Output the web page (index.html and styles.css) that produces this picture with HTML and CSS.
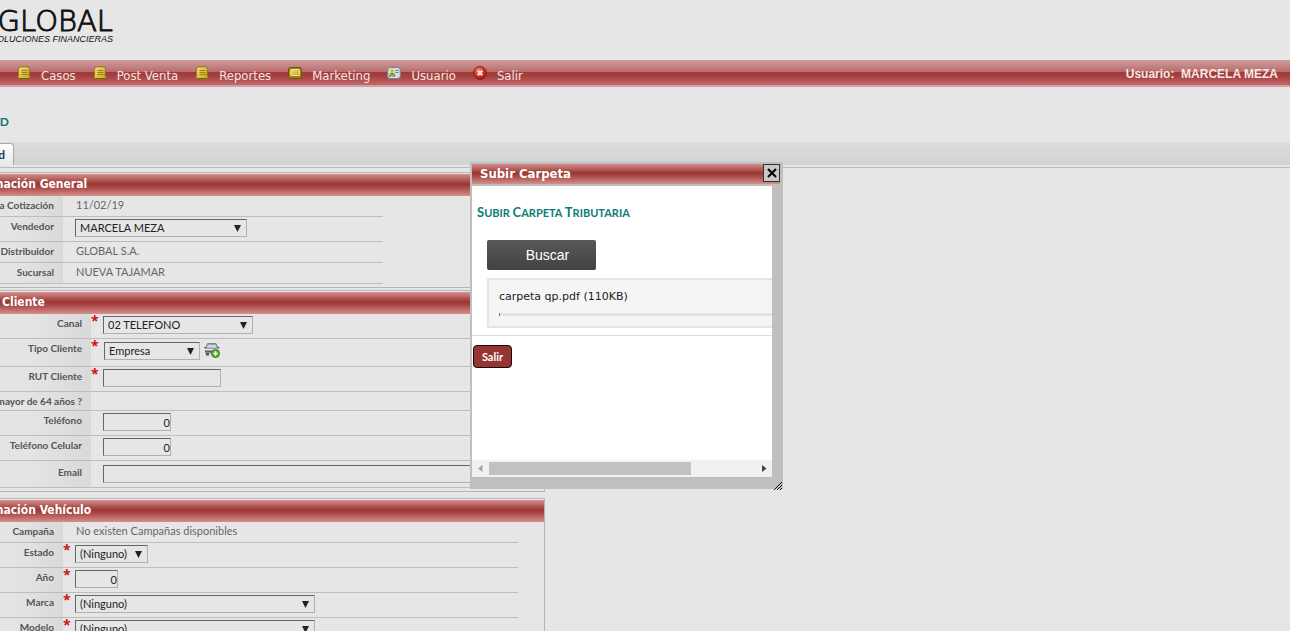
FILE: index.html
```html
<!DOCTYPE html>
<html lang="es">
<head>
<meta charset="utf-8">
<title>Global Soluciones Financieras</title>
<link rel="stylesheet" href="styles.css">
</head>
<body>
<svg class="defs" width="0" height="0" aria-hidden="true">
  <defs>
    <linearGradient id="gold" x1="0" y1="0" x2="1" y2="1"><stop offset="0" stop-color="#f0df86"/><stop offset="1" stop-color="#c9a21a"/></linearGradient>
    <radialGradient id="red" cx=".4" cy=".3" r=".8"><stop offset="0" stop-color="#f08a70"/><stop offset=".5" stop-color="#cf3422"/><stop offset="1" stop-color="#8d130c"/></radialGradient>
    <symbol id="note" viewBox="0 0 14 14"><path d="M4 .75h6.500Q12.500 1 12.500 3.500L12 9.500l1.300 1.500-1.300 2H3L.8 11.500 1.500 9.500 1.200 4Q1.500 1 4 .75z" fill="url(#gold)" stroke="#94740a"/><path d="M4.500 4.500h6M4.500 6.500h6M4.500 8.500h6" stroke="#a07c0a" fill="none"/><path d="M2.500 12.500h9.500" stroke="#7b5f08"/></symbol>
    <symbol id="card" viewBox="0 0 14 14"><rect x=".5" y="1.500" width="13" height="11" rx="2" fill="#a27f0c" stroke="#705408"/><rect x="2.500" y="3.500" width="9" height="6" rx="1" fill="url(#gold)" stroke="#f3e59a"/></symbol>
    <symbol id="user" viewBox="0 0 14 14"><rect x=".75" y="1.500" width="12.500" height="11" rx="2.500" fill="#d9dee2" stroke="#78858c"/><circle cx="5" cy="5" r="2" fill="#e8b83c"/><path d="M2 10.500Q2 7 5 7t3.500 3.500z" fill="#379b36"/><path d="M3 8l2 2 3-3" stroke="#a5d04d" fill="none"/><path d="M8.500 4.500h3M8.500 6.500h3" stroke="#63727b"/></symbol>
    <symbol id="exit" viewBox="0 0 14 14"><circle cx="7" cy="7" r="6.500" fill="url(#red)" stroke="#8d2018"/><path d="M4.800 4.800l4.400 4.400M9.200 4.800L4.800 9.200" stroke="#f5e6e2" stroke-width="2.200"/></symbol>
  </defs>
</svg>

<header class="brand">
  <div class="logo">
    <div class="logo-name">GLOBAL</div>
    <div class="logo-sub">SOLUCIONES FINANCIERAS</div>
  </div>
</header>

<nav class="menu">
  <a class="menu-item first" href="#">Inicio</a>
  <a class="menu-item" href="#"><svg class="icon"><use href="#note"/></svg>Casos</a>
  <a class="menu-item" href="#"><svg class="icon"><use href="#note"/></svg>Post Venta</a>
  <a class="menu-item" href="#"><svg class="icon"><use href="#note"/></svg>Reportes</a>
  <a class="menu-item" href="#"><svg class="icon"><use href="#card"/></svg>Marketing</a>
  <a class="menu-item" href="#"><svg class="icon"><use href="#user"/></svg>Usuario</a>
  <a class="menu-item" href="#"><svg class="icon"><use href="#exit"/></svg>Salir</a>
  <div class="session">Usuario: &nbsp;MARCELA MEZA</div>
</nav>

<main>
  <h1 class="title">SOLICITUD</h1>
  <div class="tabs"><button class="tab" type="button">Solicitud</button></div>

  <form class="sheet">
    <section class="box general">
      <h2 class="bar">Información General</h2>
      <div class="row low"><span class="label">Fecha Cotización</span><span class="mark"></span><span class="value">11/02/19</span></div>
      <div class="row"><label class="label" for="vendedor">Vendedor</label><span class="mark"></span><select class="field w172" id="vendedor"><option>MARCELA MEZA</option></select></div>
      <div class="row low"><span class="label">Distribuidor</span><span class="mark"></span><span class="value">GLOBAL S.A.</span></div>
      <div class="row low"><span class="label">Sucursal</span><span class="mark"></span><span class="value">NUEVA TAJAMAR</span></div>
    </section>

    <section class="box client">
      <h2 class="bar">Datos Cliente</h2>
      <div class="row"><label class="label" for="canal">Canal</label><span class="mark">*</span><select class="field w150" id="canal"><option>02 TELEFONO</option></select></div>
      <div class="row high"><label class="label" for="tipo">Tipo Cliente</label><span class="mark">*</span><select class="field w96" id="tipo"><option>Empresa</option></select>
        <button class="add-car" type="button" aria-label="Agregar"><svg viewBox="0 0 16 16" width="16" height="16"><path d="M3.500 1.500h8.500l2 4.500v5H1.500V6z" fill="#9aa4ae" stroke="#7b8590"/><path d="M4 3h7.500l1 2.500H3z" fill="#cfd9e4"/><path d="M0 5.500h2M13.500 5.500h2" stroke="#59636d"/><path d="M1 7.500h13.500" stroke="#e3e8ec"/><path d="M1 9.500h13.500" stroke="#59636d"/><path d="M2 11h3v2.500H2z" fill="#4c555e"/><circle cx="11.500" cy="11.500" r="4" fill="#5fa52a" stroke="#3f8117"/><path d="M11.500 9.300v4.400M9.300 11.500h4.400" stroke="#fff" stroke-width="1.500"/></svg></button></div>
      <div class="row"><label class="label" for="rut">RUT Cliente</label><span class="mark">*</span><input class="field w118" id="rut" type="text"></div>
      <div class="row slim"><span class="label">¿Es mayor de 64 años ?</span></div>
      <div class="row"><label class="label" for="fono">Teléfono</label><span class="mark"></span><input class="field number w68" id="fono" type="text" value="0"></div>
      <div class="row"><label class="label" for="celular">Teléfono Celular</label><span class="mark"></span><input class="field number w68" id="celular" type="text" value="0"></div>
      <div class="row mail"><label class="label" for="email">Email</label><span class="mark"></span><input class="field wide" id="email" type="text"></div>
    </section>

    <section class="box vehicle">
      <h2 class="bar">Información Vehículo</h2>
      <div class="row low"><span class="label">Campaña</span><span class="mark"></span><span class="value">No existen Campañas disponibles</span></div>
      <div class="row"><label class="label" for="estado">Estado</label><span class="mark">*</span><select class="field w73" id="estado"><option>(Ninguno)</option></select></div>
      <div class="row"><label class="label" for="anio">Año</label><span class="mark">*</span><input class="field number w43" id="anio" type="text" value="0"></div>
      <div class="row"><label class="label" for="marca">Marca</label><span class="mark">*</span><select class="field w240" id="marca"><option>(Ninguno)</option></select></div>
      <div class="row"><label class="label" for="modelo">Modelo</label><span class="mark">*</span><select class="field w240" id="modelo"><option>(Ninguno)</option></select></div>
    </section>
  </form>
</main>

<div class="dialog" role="dialog" aria-labelledby="dialog-title">
  <div class="dialog-head">
    <h2 class="dialog-title" id="dialog-title">Subir Carpeta</h2>
    <button class="close" type="button" aria-label="Cerrar"><svg viewBox="0 0 10 10" width="10" height="10"><path d="M1 1l8 8M9 1L1 9" stroke="#000" stroke-width="2"/></svg></button>
  </div>
  <div class="dialog-body">
    <h3 class="dialog-sub"><span class="cap">S</span>UBIR <span class="cap">C</span>ARPETA <span class="cap">T</span>RIBUTARIA</h3>
    <button class="browse" type="button">Buscar</button>
    <div class="file"><div>carpeta qp.pdf (110KB)</div><div class="track"><div class="done"></div></div></div>
    <div class="actions"><button class="leave" type="button">Salir</button></div>
    <div class="scroll">
      <svg viewBox="0 0 17 17" width="17" height="17"><path d="M10.500 5v7L6 8.500z" fill="#a3a3a3"/></svg>
      <div class="rail"><div class="thumb"></div></div>
      <svg viewBox="0 0 17 17" width="17" height="17"><path d="M7 5v7l4.500-3.500z" fill="#404040"/></svg>
    </div>
  </div>
  <svg class="grip" viewBox="0 0 9 9" width="9" height="9"><path d="M1 9l8-8M4 9l5-5M7 9l2-2" stroke="#111"/></svg>
</div>
</body>
</html>
```
FILE: styles.css
```css
* { box-sizing: border-box; }
html, body { height: 100%; overflow: hidden; }
body {
  position: relative;
  margin: 0;
  background: #e6e6e6;
  color: #555;
  font: 11px/18px "Lato", "Open Sans", sans-serif;
}
h1, h2, h3 { margin: 0; }
button { padding: 0; border: 0; font: inherit; cursor: pointer; }
.defs { position: absolute; }

.brand { height: 60px; padding-top: 8px; }
.logo { display: flex; flex-direction: column; align-items: flex-end; width: 113px; color: #111; white-space: nowrap; }
.logo-name { font: 200 29px/26px "DejaVu Sans", sans-serif; -webkit-text-stroke: 1px #111; }
.logo-sub { font: italic 9px/10px "Liberation Sans", Arial, sans-serif; }

.menu {
  display: flex;
  align-items: center;
  gap: 17px;
  height: 27px;
  margin-left: -45px;
  padding-right: 12px;
  background: linear-gradient(#cf9c9c 0, #b86c6c 12px, #a23737 12px, #a84444 17px, #c06a6c 25px, #d3a0a1 25px);
}
.menu-item {
  display: flex;
  align-items: center;
  gap: 10px;
  padding-top: 4px;
  color: #f4e4e0;
  font: 13px/20px "DejaVu Sans Condensed", "DejaVu Sans", sans-serif;
  text-decoration: none;
  white-space: nowrap;
}
.first { justify-content: flex-end; width: 45px; }
.icon { width: 14px; height: 14px; margin-bottom: 6px; }
.session { margin-left: auto; color: #f6e8e6; font: bold 12px/20px "Liberation Sans", Arial, sans-serif; white-space: nowrap; }

.title { width: 9px; height: 55px; display: flex; justify-content: flex-end; padding-top: 25px; color: #087575; font-size: 12px; line-height: 20px; }
.tabs { height: 23px; background: linear-gradient(#dedddd, #d3d2d2); }
.tab {
  width: 59px;
  height: 22px;
  margin: 1px 0 0 -45px;
  padding-right: 8px;
  border: 1px solid #aaa;
  border-bottom: 0;
  border-radius: 0 4px 0 0;
  background: linear-gradient(#fff, #e8e8e8);
  color: #123f4a;
  font-size: 12px;
  font-weight: bold;
  text-align: right;
}

.sheet { margin-top: 2px; padding-top: 4px; border-top: 1px solid #bbb; }
.box { width: 590px; margin-left: -45px; padding: 1px 0 3px; border: 1px solid #b5b5b5; }
.client { margin: 2px 0 6px -45px; }
.bar, .dialog-title { color: #fff; font: bold 12px/20px "DejaVu Sans Condensed", Verdana, sans-serif; }
.bar { height: 22px; padding-left: 7px; background: linear-gradient(#d58e8c, #993734 45%, #a64541 58%, #d68f8d); white-space: nowrap; }

.row { display: flex; align-items: flex-start; height: 25px; border-bottom: 1px solid #bdbdbd; }
.general .row { width: 427px; }
.client .row, .vehicle .row { width: 562px; }
.row.low { height: 21px; }
.row.high { height: 28px; }
.row.slim { height: 19px; }
.row.mail { height: 27px; }
.row.high .field, .add-car { margin-top: 3px; }
.row.mail .field { margin-top: 4px; }
.label {
  flex: none;
  align-self: stretch;
  width: 107px;
  padding-right: 9px;
  background: linear-gradient(90deg, #e4e4e4 55%, #d9d9d9);
  font-size: 10px;
  font-weight: bold;
  text-align: right;
  white-space: nowrap;
}
.client .label { width: 135px; }
.row.mail .label { padding-top: 2px; }
.mark { flex: none; width: 12px; color: #d01010; font: bold 14px/14px "Open Sans", sans-serif; }
.value { padding-left: 1px; color: #666; white-space: nowrap; }

.field {
  height: 18px;
  margin: 2px 0 0;
  padding: 0 4px;
  border: 1px solid #b0b0b0;
  border-top-color: #666;
  border-left-color: #666;
  border-radius: 0;
  background: transparent;
  color: #222;
  font: 11px/16px "Lato", "Open Sans", sans-serif;
}
select.field {
  appearance: none;
  background: url("data:image/svg+xml,%3Csvg xmlns='http://www.w3.org/2000/svg' width='7' height='7'%3E%3Cpath d='M0 0h7L3.500 7z' fill='%23222'/%3E%3C/svg%3E") right 5px center no-repeat;
}
.number { padding: 0; text-align: right; }
.w43 { width: 43px; }
.w68 { width: 68px; }
.w73 { width: 73px; }
.w96 { width: 96px; margin-left: 1px; }
.w118 { width: 118px; }
.w150 { width: 150px; }
.w172 { width: 172px; }
.w240 { width: 240px; }
.wide { flex: 1; }
.add-car { display: flex; margin-left: 4px; background: none; }

.dialog {
  position: absolute;
  left: 470px;
  top: 162px;
  width: 313px;
  padding: 2px 3px 12px 2px;
  background: #bfbfbf;
}
.dialog-head { display: flex; justify-content: space-between; height: 20px; background: linear-gradient(#d58e8c, #993734 45%, #a64541 58%, #d68f8d); }
.dialog-title { padding-left: 8px; font-size: 13px; }
.close { display: flex; align-items: center; justify-content: center; width: 17px; height: 18px; border: 1px solid #111; border-top-color: #fff; border-left-color: #fff; outline: 1px solid #333; outline-offset: -1px; background: #c8c8c8; }
.dialog-body { display: flex; flex-direction: column; align-items: flex-start; width: 300px; height: 291px; margin-top: 2px; overflow: hidden; background: #fff; }
.dialog-sub { margin: 16px 0 0 5px; color: #0d7c78; font-size: 11px; line-height: 20px; white-space: nowrap; }
.cap { font-size: 13px; }
.browse { width: 109px; height: 30px; margin: 17px 0 0 15px; padding-left: 12px; border-radius: 2px; background: linear-gradient(#585858, #424242); color: #fff; font: 14px/30px "Liberation Sans", Arial, sans-serif; }
.file { align-self: stretch; height: 50px; margin: 8px 0 7px 15px; padding: 7px 0 0 10px; border: 2px solid #e5e5e5; border-right: 0; background: #f5f5f5; color: #222; font: 11px/20px "DejaVu Sans", Verdana, sans-serif; }
.track { height: 3px; margin-top: 6px; background: #e2e2e2; }
.done { width: 1px; height: 3px; background: #0b97c4; }
.actions { flex: 1; align-self: stretch; padding: 9px 0 0 1px; border-top: 1px solid #ddd; }
.leave { display: block; width: 39px; height: 23px; border: 1px solid #180505; border-radius: 4px; background: #963634; color: #fff; font-size: 11px; font-weight: bold; }
.scroll { display: flex; align-self: stretch; height: 17px; background: #f1f1f1; }
.rail { flex: 1; padding: 2px 0; }
.thumb { width: 76%; height: 13px; background: #c1c1c1; }
.grip { position: absolute; right: 1px; bottom: -1px; }
```
